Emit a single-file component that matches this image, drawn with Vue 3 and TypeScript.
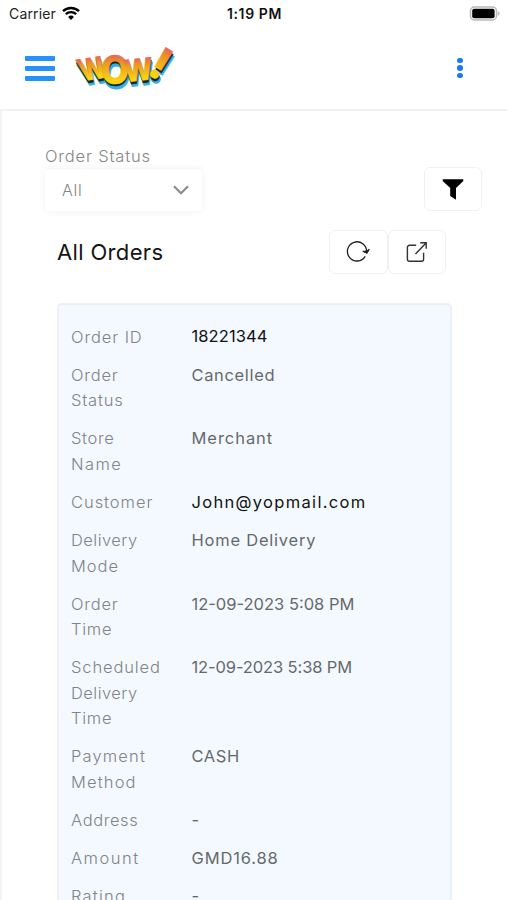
<script setup lang="ts">
interface Word { text: string; spacing: number }
interface Row { label: Word[]; value: Word; strong?: boolean; raised?: boolean }

const w = (text: string, spacing = 0.2): Word => ({ text, spacing })

const rows: Row[] = [
  { label: [w('Order ID', 0.9)], value: w('18221344', 0.1), strong: true, raised: true },
  { label: [w('Order', 0.8), w('Status', 0.8)], value: w('Cancelled', 0.65) },
  { label: [w('Store', 0.65), w('Name', 1.4)], value: w('Merchant', 0.95) },
  { label: [w('Customer', 0.95)], value: w('John@yopmail.com', 1.32), strong: true },
  { label: [w('Delivery', 0.45), w('Mode', 0.95)], value: w('Home Delivery', 0.77) },
  { label: [w('Order', 0.8), w('Time', 0.75)], value: w('12-09-2023 5:08 PM', 0) },
  { label: [w('Scheduled', 0.88), w('Delivery', 0.45), w('Time', 0.75)], value: w('12-09-2023 5:38 PM', -0.12) },
  { label: [w('Payment', 1.15), w('Method', 1.15)], value: w('CASH', 0.6) },
  { label: [w('Address', 0.6)], value: w('-') },
  { label: [w('Amount', 1.5)], value: w('GMD16.88', 0.85) },
  { label: [w('Rating', 1.2)], value: w('-') },
]
</script>

<template>
  <div class="screen">
    <div class="status">
      <div class="carrier">
        <span>Carrier</span>
        <svg width="18" height="14" viewBox="0 0 18 14" fill="none" stroke="#000">
          <path d="M1 5.2a11.6 11.6 0 0 1 16 0" stroke-width="2.5" />
          <path d="M3.8 8.2a7.6 7.6 0 0 1 10.4 0" stroke-width="2.3" />
          <path d="M9 14l-2.9-3.1a4.2 4.2 0 0 1 5.8 0z" fill="#000" stroke="none" />
        </svg>
      </div>
      <div class="clock">1:19 PM</div>
      <svg class="battery" width="31" height="15" viewBox="0 0 31 15">
        <rect x="1.5" y="1" width="26" height="13" rx="4" fill="#fff" stroke="#b9b9b9" stroke-width="1.5" />
        <rect x="3.2" y="2.8" width="22.4" height="9.4" rx="2" fill="#000" />
        <path d="M28.8 5c2.4 1 2.4 4 0 5z" fill="#b9b9b9" />
      </svg>
    </div>

    <header class="header">
      <button class="icon-btn menu" aria-label="Menu"><i></i><i></i><i></i></button>
      <svg class="logo" width="100" height="54" viewBox="0 0 100 54">
        <defs>
          <linearGradient id="gold" x1="0" y1="0" x2="0" y2="1">
            <stop offset="0.12" stop-color="#e5506a" />
            <stop offset="0.38" stop-color="#eb9a23" />
            <stop offset="0.75" stop-color="#fbd411" />
          </linearGradient>
          <g id="letters">
            <text font-size="30" textLength="26" lengthAdjust="spacingAndGlyphs" transform="translate(8 40) rotate(-9) skewX(12)">W</text>
            <text font-size="39" textLength="28" lengthAdjust="spacingAndGlyphs" transform="translate(26 42.5)">O</text>
            <text font-size="30" textLength="29" lengthAdjust="spacingAndGlyphs" transform="translate(50 41) rotate(-6)">W</text>
            <text font-size="44" transform="translate(71 32) rotate(31)">!</text>
          </g>
        </defs>
        <use href="#letters" x="1.2" y="5" fill="#35aee0" stroke="#35aee0" stroke-width="1" />
        <use href="#letters" x="0.6" y="2.8" fill="#15252d" stroke="#15252d" stroke-width="0.5" />
        <use href="#letters" fill="url(#gold)" stroke="url(#gold)" stroke-width="0.7" />
      </svg>
      <button class="icon-btn more" aria-label="More"><i></i><i></i><i></i></button>
    </header>

    <main class="content">
      <div class="filters">
        <div class="field">
          <label>Order Status</label>
          <div class="select">
            <span>All</span>
            <svg width="16" height="10" viewBox="0 0 16 10" fill="none" stroke="#8b8b8b" stroke-width="2.2"><path d="M1 1.2l7 7 7-7" /></svg>
          </div>
        </div>
        <button class="box funnel" aria-label="Filter">
          <svg width="22" height="22" viewBox="0 0 22 22"><path d="M.7 1.3h20.6v1.6L14 10v11.8L8.2 18v-8L.7 2.9z" fill="#000" /></svg>
        </button>
      </div>

      <div class="title-row">
        <h1>All Orders</h1>
        <div class="actions">
          <button class="box" aria-label="Refresh">
            <svg width="24" height="22" viewBox="0 0 24 22" fill="none" stroke="#222" stroke-width="1.3">
              <path d="M19.2 15.4A9.6 9.6 0 1 1 20.6 10.8" />
              <path d="M16.8 10l4 2 2.4-3.8" />
              <path d="M18 10.6l2.8 1.4 1.5-2.6z" fill="#222" />
            </svg>
          </button>
          <button class="box" aria-label="Export">
            <svg width="22" height="22" viewBox="0 0 22 22" fill="none" stroke="#333" stroke-width="1.4">
              <path d="M10.2 4.3H3.4a2 2 0 0 0-2 2v12a2 2 0 0 0 2 2h12.2a2 2 0 0 0 2-2v-6.5M9.5 13L20 2M14.2 1.7h6v6" />
            </svg>
          </button>
        </div>
      </div>

      <section class="card">
        <div v-for="(row, i) in rows" :key="i" class="row">
          <div class="label">
            <div v-for="(line, j) in row.label" :key="j" :style="{ letterSpacing: line.spacing + 'px' }">{{ line.text }}</div>
          </div>
          <div class="value" :class="{ strong: row.strong, raised: row.raised }" :style="{ letterSpacing: row.value.spacing + 'px' }">{{ row.value.text }}</div>
        </div>
      </section>
    </main>
  </div>
</template>

<style>
body { margin: 0; background: #fff; overflow: hidden; }
</style>

<style scoped>
.screen { box-sizing: border-box; width: 507px; height: 900px; overflow: hidden; display: flex; flex-direction: column; background: #fff; font-family: Inter, "Liberation Sans", sans-serif; }
svg { display: block; flex: none; }
button { padding: 0; border: 0; background: none; font: inherit; }
.status { display: grid; grid-template-columns: 1fr auto 1fr; align-items: center; height: 27px; padding: 0 7px 0 9px; font-size: 14px; color: #222; flex: none; }
.carrier { display: flex; align-items: center; gap: 6px; letter-spacing: 0.15px; }
.carrier svg { margin-bottom: 2px; }
.clock { font-weight: 600; color: #111; letter-spacing: 0.6px; }
.battery { justify-self: end; margin-bottom: 1px; }
.header { display: flex; align-items: center; box-sizing: border-box; height: 84px; padding: 0 44px 0 25px; border-bottom: 2px solid #f1f1f1; flex: none; }
.menu { display: flex; flex-direction: column; gap: 5px; width: 30px; }
.menu i { height: 5px; border-radius: 1px; background: #2492f8; }
.logo { margin-left: 20px; font-family: Inter, sans-serif; font-weight: 800; overflow: visible; }
.more { display: flex; flex-direction: column; gap: 2px; margin-left: auto; }
.more i { width: 5.6px; height: 5.6px; border-radius: 50%; background: #187bf0; }
.content { flex: 1; min-height: 0; border-left: 2px solid #f3f3f3; padding: 33px 25px 0 43px; overflow: hidden; }
.filters { display: flex; justify-content: space-between; align-items: flex-end; }
.field label { display: block; height: 25px; line-height: 25px; font-size: 16.5px; font-weight: 300; color: #858585; letter-spacing: 0.83px; }
.select { box-sizing: border-box; width: 157px; height: 42px; display: flex; align-items: center; justify-content: space-between; padding: 0 13px 0 17px; border-radius: 4px; background: #fff; box-shadow: 0 0 8px rgba(0, 0, 0, 0.06); font-size: 16px; font-weight: 300; letter-spacing: 0.7px; color: #858585; }
.box { box-sizing: border-box; width: 58.5px; height: 44px; display: flex; align-items: center; justify-content: center; border: 1.5px solid #f1f1f1; border-radius: 6px; background: #fff; }
.title-row { display: flex; align-items: center; justify-content: space-between; height: 44px; margin-top: 18.5px; padding: 0 36px 0 12px; }
h1 { margin: 0; font-size: 22px; line-height: 26px; font-weight: 400; color: #151515; letter-spacing: 0.35px; }
.actions { display: flex; }
.card { box-sizing: border-box; margin: 29.5px 30px 0 12px; padding: 19.8px 12px; height: 700px; border: 2px solid #edf0f3; border-radius: 5px; background: #f4f9ff; font-size: 16.5px; line-height: 25.6px; }
.row { display: grid; grid-template-columns: 120.5px 1fr; margin-bottom: 12.42px; white-space: nowrap; }
.label { font-weight: 300; color: #808387; }
.value { font-weight: 400; color: #66696c; }
.value.strong { color: #101214; }
.value.raised { position: relative; top: -1px; }
</style>
